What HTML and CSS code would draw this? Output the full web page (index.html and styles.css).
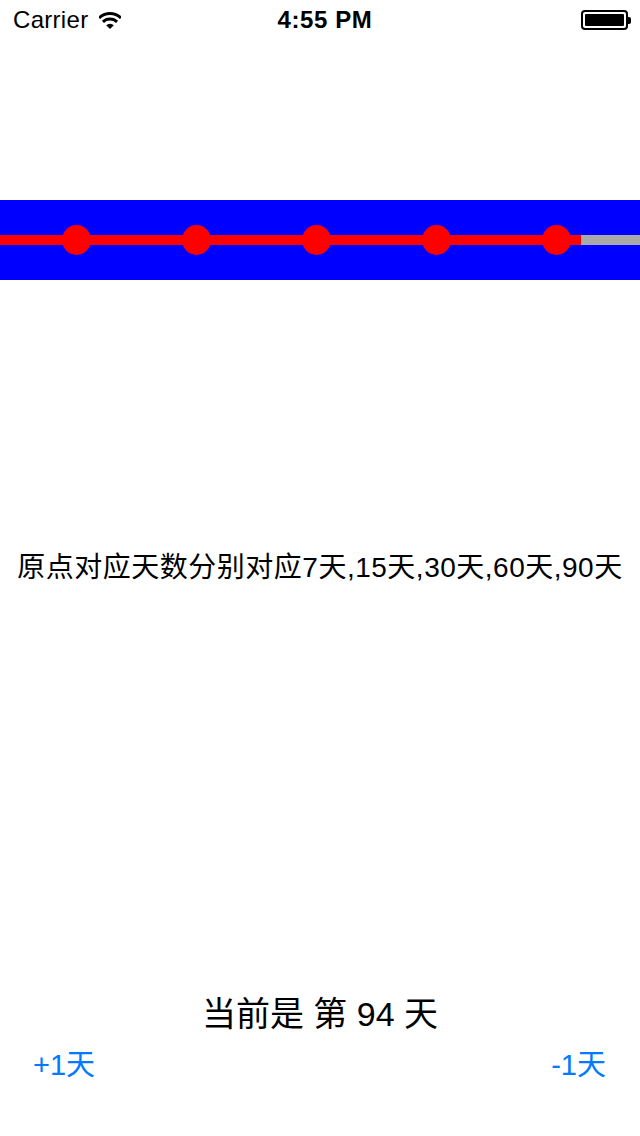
FILE: index.html
```html
<!DOCTYPE html>
<html lang="zh">
<head>
<meta charset="utf-8">
<title>Days</title>
<link rel="stylesheet" href="styles.css">
</head>
<body>
<div class="screen">
  <div class="status-bar">
    <div class="sb-left">
      <span class="carrier">Carrier</span>
      <svg class="wifi" width="22" height="19" viewBox="0 0 22 19">
        <path d="M0.04 8.04 A15.5 15.5 0 0 1 21.96 8.04" fill="none" stroke="#000" stroke-width="3"/>
        <path d="M3.93 11.93 A10 10 0 0 1 18.07 11.93" fill="none" stroke="#000" stroke-width="3"/>
        <path d="M11 19 L7.2 15.2 A5.4 5.4 0 0 1 14.8 15.2 Z" fill="#000"/>
      </svg>
    </div>
    <div class="sb-time">4:55 PM</div>
    <div class="sb-right">
      <div class="battery"><div class="battery-fill"></div></div>
      <div class="battery-nub"></div>
    </div>
  </div>

  <div class="track">
    <span class="dot"></span>
    <span class="dot"></span>
    <span class="dot"></span>
    <span class="dot"></span>
    <span class="dot"></span>
  </div>

  <p class="legend">原点对应天数分别对应7天,15天,30天,60天,90天</p>

  <p class="current">当前是 第 94 天</p>

  <div class="buttons">
    <span class="btn">+1天</span>
    <span class="btn">-1天</span>
  </div>
</div>
</body>
</html>
```

FILE: styles.css
```css
html, body {
  margin: 0;
  padding: 0;
  background: #fff;
}

.screen {
  width: 640px;
  height: 1136px;
  overflow: hidden;
  font-family: "Liberation Sans", "Noto Sans CJK SC", sans-serif;
  color: #000;
}

.status-bar {
  height: 40px;
  display: grid;
  grid-template-columns: 1fr auto 1fr;
  align-items: center;
  padding: 0 9px 0 13px;
}

.sb-left {
  display: flex;
  align-items: center;
  gap: 11px;
}

.carrier {
  font-size: 24px;
  line-height: 40px;
  letter-spacing: 0.3px;
}

.wifi {
  display: block;
  margin-top: -1px;
}

.sb-time {
  font-size: 24px;
  font-weight: bold;
  line-height: 40px;
  letter-spacing: 0.6px;
  padding-left: 6px;
}

.sb-right {
  display: flex;
  justify-content: flex-end;
  align-items: center;
}

.battery {
  box-sizing: border-box;
  width: 47px;
  height: 20px;
  border: 2px solid #000;
  border-radius: 4px;
  padding: 2px;
}

.battery-fill {
  width: 100%;
  height: 100%;
  background: #000;
  border-radius: 1px;
}

.battery-nub {
  width: 3px;
  height: 7px;
  background: #000;
  border-radius: 0 2px 2px 0;
}

.track {
  margin-top: 160px;
  height: 80px;
  background-color: #0000ff;
  background-image: linear-gradient(to right, #ff0000 581px, #aaaaaa 581px);
  background-repeat: no-repeat;
  background-size: 100% 10px;
  background-position: 0 35px;
  display: flex;
  align-items: center;
  gap: 91px;
  padding-left: 62px;
}

.dot {
  width: 29px;
  height: 30px;
  border-radius: 50%;
  background: #ff0000;
}

.legend {
  margin: 268px 0 0;
  font-size: 28px;
  line-height: 40px;
  text-align: center;
  letter-spacing: 0.5px;
}

.current {
  margin: 406px 0 0;
  font-size: 34px;
  line-height: 40px;
  text-align: center;
}

.buttons {
  margin-top: 11px;
  display: flex;
  justify-content: space-between;
  padding: 0 34px 0 33px;
}

.btn {
  font-size: 29px;
  line-height: 40px;
  color: #007aff;
}
```
